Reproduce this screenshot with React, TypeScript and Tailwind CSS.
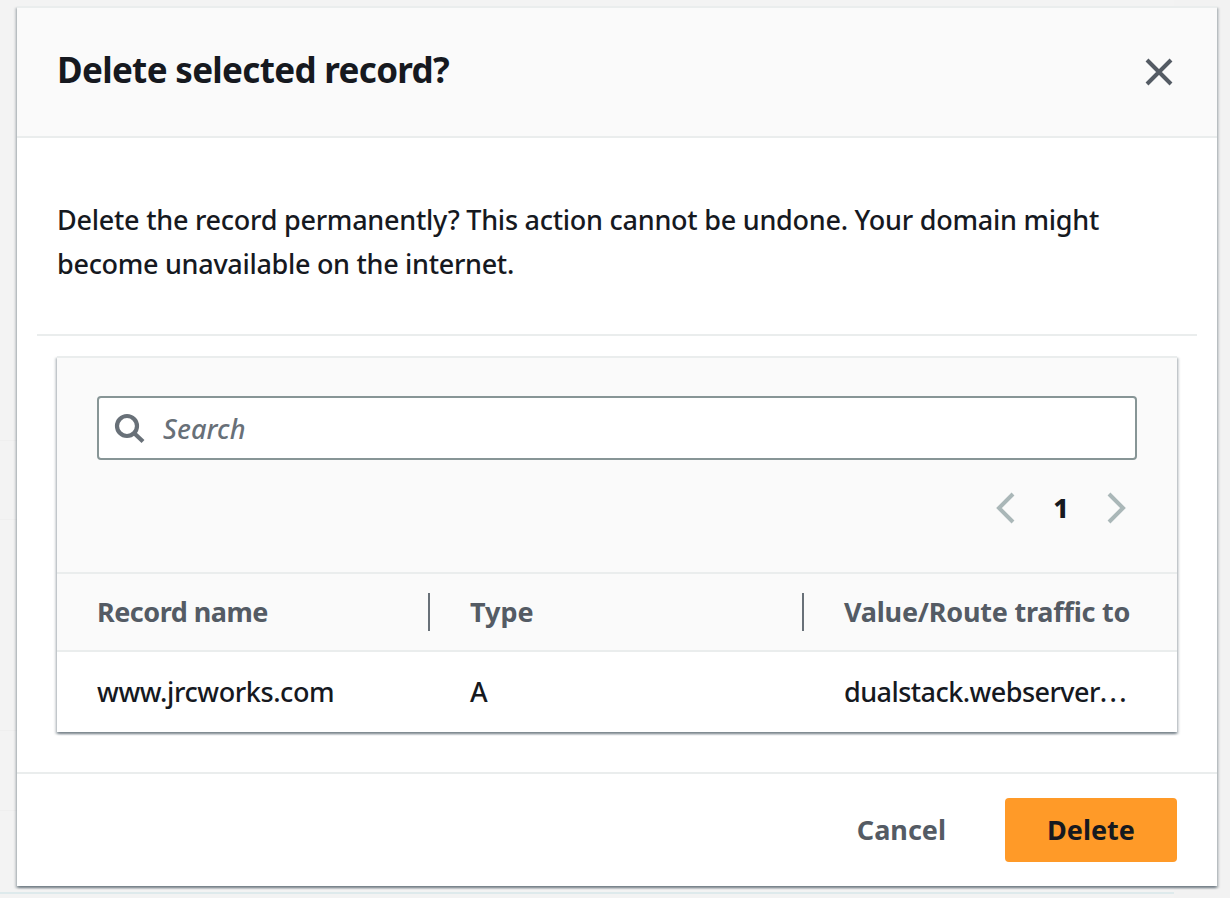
import React from "react";

const panelShadow =
  "shadow-[0_2px_2px_0_rgba(10,28,46,0.34),2px_2px_2px_0_rgba(10,28,46,0.16),-2px_2px_2px_0_rgba(10,28,46,0.16)]";

function CloseIcon() {
  return (
    <svg className="block h-8 w-8" viewBox="0 0 32 32" fill="none" stroke="currentColor" strokeWidth="4">
      <path d="M4 4l24 24M28 4L4 28" />
    </svg>
  );
}

function SearchIcon() {
  return (
    <svg className="block h-8 w-8 shrink-0" viewBox="0 0 32 32" fill="none" stroke="currentColor" strokeWidth="4.2">
      <circle cx="14" cy="14" r="10" />
      <path d="M21 21l9 8.5" />
    </svg>
  );
}

function Chevron({ direction }: { direction: "left" | "right" }) {
  return (
    <svg className="block h-8 w-8" viewBox="0 0 32 32" fill="none" stroke="currentColor" strokeWidth="4">
      <path d={direction === "left" ? "M24 2L10 16l14 14" : "M8 2L22 16L8 30"} />
    </svg>
  );
}

function Backdrop() {
  return (
    <div className="flex h-[898px] w-[1230px] bg-[#f2f2f2]">
      <div className="flex w-[1174px] flex-col bg-[#f3f3f3]">
        <div className="h-[441px] border-b border-[#efefef]" />
        <div className="h-[79px] border-b border-[#efefef]" />
        <div className="h-[211px] border-b border-[#efefef]" />
        <div className="h-[80px] border-b border-[#efefef]" />
        <div className="h-[83px] border-b-2 border-[#deeaec]" />
      </div>
    </div>
  );
}

function RecordTable() {
  return (
    <div className={`mx-10 mt-5 border-t-2 border-[#eaeded] bg-white ${panelShadow}`}>
      <div className="h-[214px] bg-[#fafafa] px-10 pt-[38px]">
        <label className="flex h-16 items-center rounded-[4px] border-2 border-[#879596] bg-white pl-[14px] text-[#687078]">
          <SearchIcon />
          <input
            className="mt-[2px] ml-[18px] w-[900px] bg-transparent text-[27px] leading-9 font-medium tracking-[0.1px] italic outline-none placeholder:text-[#687078] placeholder:opacity-100"
            placeholder="Search"
          />
        </label>
        <div className="mt-8 flex h-8 items-center justify-end text-[#aab7b8]">
          <button aria-label="Previous page"><Chevron direction="left" /></button>
          <span className="w-[80px] text-center text-[27px] leading-8 font-extrabold text-[#16191f]">1</span>
          <button aria-label="Next page" className="mr-1"><Chevron direction="right" /></button>
        </div>
      </div>
      <div className="flex h-20 items-center border-y-2 border-[#eaeded] bg-[#fafafa] text-[27px] leading-9 font-bold whitespace-nowrap text-[#545b64]">
        <div className="flex h-[38px] w-[373px] items-center border-r-2 border-[#687078] pl-10">
          <span className="tracking-[-0.5px]">Record name</span>
        </div>
        <div className="flex h-[38px] w-[374px] items-center border-r-2 border-[#687078] pl-10">
          <span className="tracking-[0px]">Type</span>
        </div>
        <div className="pl-10 tracking-[-0.22px]">Value/Route traffic to</div>
      </div>
      <div className="flex h-20 items-center text-[27px] leading-9 font-medium whitespace-nowrap text-[#16191f]">
        <div className="w-[373px] pl-10 tracking-[-0.4px]">www.jrcworks.com</div>
        <div className="w-[374px] pl-10">A</div>
        <div className="pl-10 tracking-[-0.55px]">dualstack.webserver<span className="tracking-[2.4px]">...</span></div>
      </div>
    </div>
  );
}

export default function App() {
  return (
    <div className="relative h-[898px] w-[1230px] overflow-hidden font-['Noto_Sans',sans-serif] text-[#16191f]">
      <Backdrop />
      <div
        role="dialog"
        className={`absolute top-[6px] left-[17px] flex h-[880px] w-[1200px] flex-col border-t-2 border-[#eaeded] bg-white ${panelShadow}`}
      >
        <header className="flex h-[130px] shrink-0 items-center justify-between border-b-2 border-[#eaeded] bg-[#fafafa] pr-[42px] pl-10">
          <h1 className="pb-[4px] text-[35px] leading-[44px] font-bold tracking-[-0.68px] whitespace-nowrap">
            <span>Delete selected record?</span>
          </h1>
          <button aria-label="Close" className="text-[#545b64]"><CloseIcon /></button>
        </header>
        <p className="h-[196px] shrink-0 px-10 pt-[60px] text-[27px] leading-[44px] font-medium tracking-[-0.25px] whitespace-nowrap">
          <span>Delete the record permanently? This action cannot be undone. Your domain might</span>
          <br />
          <span className="tracking-[-0.3px]">become unavailable on the internet.</span>
        </p>
        <hr className="mx-5 h-[2px] shrink-0 border-0 bg-[#eaeded]" />
        <RecordTable />
        <footer className="mt-10 flex flex-1 items-center justify-end border-t-2 border-[#eaeded] pr-10 text-[27px] font-bold">
          <button className="mr-[59px] tracking-[0px] text-[#545b64]">Cancel</button>
          <button className="h-16 w-[172px] rounded-[4px] bg-[#ff9a28] tracking-[0px]">Delete</button>
        </footer>
      </div>
    </div>
  );
}
